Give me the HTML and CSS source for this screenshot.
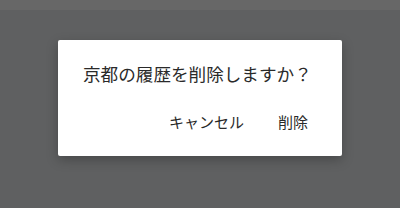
FILE: index.html
```html
<!DOCTYPE html>
<html lang="ja">
  <head>
    <meta charset="UTF-8" />
    <meta name="viewport" content="width=device-width, initial-scale=1.0" />
    <title>履歴の削除</title>
    <link rel="stylesheet" href="styles.css">
  </head>
  <body>
    <div class="topbar"></div>
    <div class="overlay">
      <div class="dialog">
        <p class="message">京都の履歴を削除しますか？</p>
        <div class="actions">
          <button class="btn">キャンセル</button>
          <button class="btn">削除</button>
        </div>
      </div>
    </div>
  </body>
</html>
```
FILE: styles.css
```css
* {
  margin: 0;
  padding: 0;
  box-sizing: border-box;
}

body {
  width: 400px;
  height: 208px;
  background-color: #5f6061;
  font-family: Roboto, "Noto Sans CJK JP", sans-serif;
  overflow: hidden;
}

.topbar {
  height: 10px;
  background-color: #676767;
}

.overlay {
  padding: 30px 58px 0;
}

.dialog {
  background-color: #ffffff;
  border-radius: 2px;
  height: 116px;
  padding: 22px 24px 0 25px;
  box-shadow: 0 4px 12px rgba(0, 0, 0, 0.25);
}

.message {
  font-size: 17.6px;
  line-height: 26px;
  color: #2a2a2a;
}

.actions {
  display: flex;
  justify-content: flex-end;
  gap: 34px;
  margin-top: 25px;
  padding-right: 10px;
}

.btn {
  border: none;
  background: transparent;
  font-family: inherit;
  font-size: 15px;
  line-height: 20px;
  color: #2a2a2a;
}
```
